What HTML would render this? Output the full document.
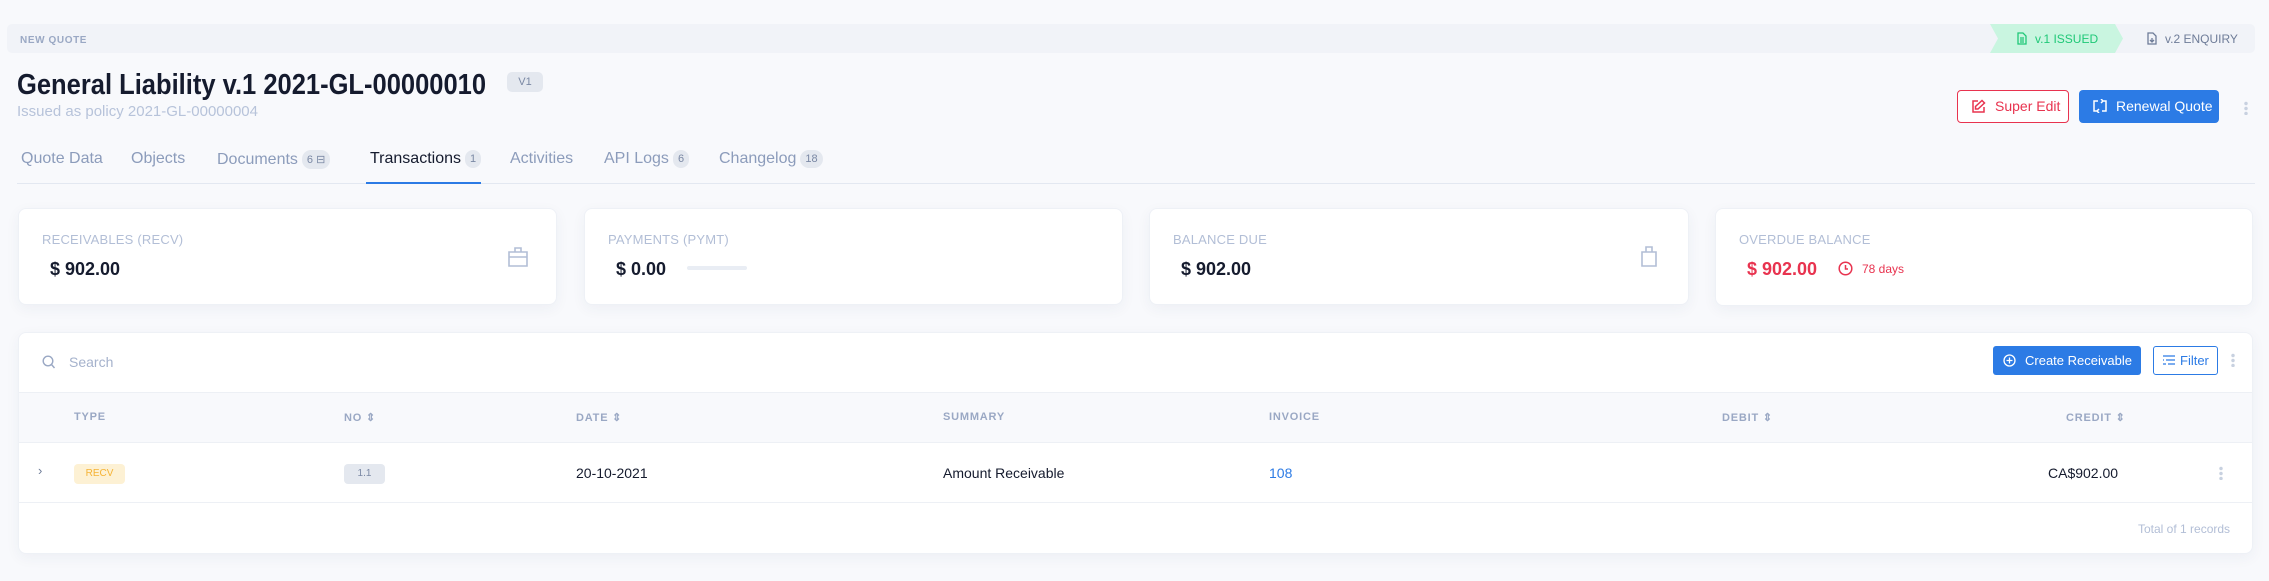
<!DOCTYPE html>
<html><head><meta charset="utf-8"><style>
*{box-sizing:border-box;margin:0;padding:0}
body{width:2269px;height:581px;background:#f8f9fc;font-family:"Liberation Sans",sans-serif;position:relative;overflow:hidden;color:#151b2e}
.a{position:absolute;white-space:nowrap}
.card{position:absolute;background:#fff;border-radius:8px;box-shadow:0 4px 14px rgba(40,60,100,.05);border:1px solid #eef1f6}
.lbl{font-size:13px;color:#b2bed6;letter-spacing:.2px}
.amt{font-size:18px;font-weight:bold;color:#151b2e}
.th{font-size:11px;font-weight:bold;color:#9aa8c4;letter-spacing:.8px}
.tab{font-size:16px;color:#8c9cbb;top:150px}
.cnt{display:inline-block;background:#e4e8ef;color:#7a88a4;border-radius:9px;font-size:11px;padding:3px 5px;margin-left:4px;vertical-align:1px}
</style></head><body>
<div class="a" style="left:7px;top:24px;width:2248px;height:29px;background:#f1f3f8;border-radius:5px"></div>
<div class="a" style="left:20px;top:35px;font-size:10px;font-weight:bold;color:#9aa8c4;letter-spacing:.6px">NEW QUOTE</div>
<svg class="a" style="left:1990px;top:24px" width="135" height="29"><polygon points="0,0 125,0 133,14.5 125,29 0,29 8,14.5" fill="#c9f5e0"/></svg>
<svg class="a" style="left:2017px;top:32px" width="10" height="13" viewBox="0 0 10 13"><path d="M1 1h5l3 3v8H1z M3 6h4M3 8h4M3 10h4" fill="none" stroke="#1fc877" stroke-width="1.3"/></svg>
<div class="a" style="left:2035px;top:32px;font-size:12px;color:#1fc877">v.1 ISSUED</div>
<svg class="a" style="left:2147px;top:32px" width="10" height="13" viewBox="0 0 10 13"><path d="M1 1h5l3 3v8H1z M5 6v4M3 8l2 2 2-2" fill="none" stroke="#6e7c98" stroke-width="1.3"/></svg>
<div class="a" style="left:2165px;top:32px;font-size:12px;color:#6e7c98">v.2 ENQUIRY</div>

<div class="a" style="left:17px;top:69px;font-size:29px;font-weight:bold;color:#151b2e;transform:scaleX(0.88);transform-origin:0 0">General Liability v.1 2021-GL-00000010</div>
<div class="a" style="left:507px;top:72px;width:36px;height:20px;background:#e4e8ef;border-radius:5px;font-size:11px;color:#7a88a4;text-align:center;line-height:20px">V1</div>
<div class="a" style="left:17px;top:103px;font-size:15px;color:#b7c3da">Issued as policy 2021-GL-00000004</div>

<div class="a" style="left:1957px;top:90px;width:112px;height:33px;border:1px solid #e8334f;border-radius:4px;background:#fff"></div>
<svg class="a" style="left:1971px;top:99px" width="15" height="15" viewBox="0 0 15 15"><path d="M7 2H2v11h11V8M11 1.5l2.5 2.5L7 10H4.5V7.5z" fill="none" stroke="#e8334f" stroke-width="1.5"/></svg>
<div class="a" style="left:1995px;top:98px;font-size:14px;color:#e8334f">Super Edit</div>
<div class="a" style="left:2079px;top:90px;width:140px;height:33px;background:#2c7be5;border-radius:4px"></div>
<svg class="a" style="left:2093px;top:99px" width="14" height="14" viewBox="0 0 14 14"><path d="M5 2H1v10h3M9 2h4v10H9M6 10l-2 2 2 2M8 0l2 2-2 2" fill="none" stroke="#fff" stroke-width="1.5"/></svg>
<div class="a" style="left:2116px;top:98px;font-size:14px;color:#fff">Renewal Quote</div>
<div class="a" style="left:2244px;top:101px;width:4px;height:14px;background:radial-gradient(circle,#c8d1e0 1.5px,transparent 2px) 0 0/4px 5px"></div>

<div class="a tab" style="left:21px">Quote Data</div>
<div class="a tab" style="left:131px">Objects</div>
<div class="a tab" style="left:217px">Documents<span class="cnt">6 ⊟</span></div>
<div class="a tab" style="left:370px;color:#151b2e">Transactions<span class="cnt">1</span></div>
<div class="a tab" style="left:510px">Activities</div>
<div class="a tab" style="left:604px">API Logs<span class="cnt">6</span></div>
<div class="a tab" style="left:719px">Changelog<span class="cnt">18</span></div>
<div class="a" style="left:17px;top:183px;width:2238px;height:1px;background:#e3e8f1"></div>
<div class="a" style="left:366px;top:182px;width:115px;height:2px;background:#2c7be5"></div>

<div class="card" style="left:18px;top:208px;width:539px;height:97px"></div>
<div class="card" style="left:584px;top:208px;width:539px;height:97px"></div>
<div class="card" style="left:1149px;top:208px;width:540px;height:97px"></div>
<div class="card" style="left:1715px;top:208px;width:538px;height:98px"></div>
<div class="a lbl" style="left:42px;top:232px">RECEIVABLES (RECV)</div>
<div class="a amt" style="left:50px;top:259px">$ 902.00</div>
<svg class="a" style="left:507px;top:246px" width="22" height="22" viewBox="0 0 22 22"><path d="M2 6h18v14H2zM8 6V2h6v4M2 11h18" fill="none" stroke="#b2bed6" stroke-width="1.6"/></svg>
<div class="a lbl" style="left:608px;top:232px">PAYMENTS (PYMT)</div>
<div class="a amt" style="left:616px;top:259px">$ 0.00</div>
<div class="a" style="left:687px;top:266px;width:60px;height:4px;background:#e9edf4;border-radius:2px"></div>
<div class="a lbl" style="left:1173px;top:232px">BALANCE DUE</div>
<div class="a amt" style="left:1181px;top:259px">$ 902.00</div>
<svg class="a" style="left:1640px;top:244px" width="18" height="24" viewBox="0 0 18 24"><path d="M2 8h14v14H2zM6 8V3h6v5" fill="none" stroke="#b2bed6" stroke-width="1.6"/></svg>
<div class="a lbl" style="left:1739px;top:232px">OVERDUE BALANCE</div>
<div class="a amt" style="left:1747px;top:259px;color:#e8334f">$ 902.00</div>
<svg class="a" style="left:1838px;top:261px" width="15" height="15" viewBox="0 0 15 15"><circle cx="7.5" cy="7.5" r="6.3" fill="none" stroke="#e8334f" stroke-width="1.5"/><path d="M7.5 4v4h2.5" fill="none" stroke="#e8334f" stroke-width="1.5"/></svg>
<div class="a" style="left:1862px;top:262px;font-size:12px;color:#e8334f">78 days</div>

<div class="card" style="left:18px;top:332px;width:2235px;height:222px;overflow:hidden">
 <div class="a" style="left:0;top:59px;width:100%;height:51px;background:#f8f9fc;border-top:1px solid #edf0f5;border-bottom:1px solid #edf0f5"></div>
 <div class="a" style="left:0;top:169px;width:100%;height:1px;background:#edf0f5"></div>
</div>
<svg class="a" style="left:42px;top:355px" width="14" height="15" viewBox="0 0 14 15"><circle cx="6" cy="6" r="4.8" fill="none" stroke="#9aa8c4" stroke-width="1.4"/><path d="M9.5 9.5l3 3.5" stroke="#9aa8c4" stroke-width="1.4"/></svg>
<div class="a" style="left:69px;top:354px;font-size:14px;color:#a5b2cc">Search</div>
<div class="a" style="left:1993px;top:346px;width:148px;height:29px;background:#2c7be5;border-radius:3px"></div>
<svg class="a" style="left:2003px;top:354px" width="13" height="13" viewBox="0 0 13 13"><circle cx="6.5" cy="6.5" r="5.5" fill="none" stroke="#fff" stroke-width="1.3"/><path d="M6.5 3.5v6M3.5 6.5h6" stroke="#fff" stroke-width="1.3"/></svg>
<div class="a" style="left:2025px;top:353px;font-size:13px;color:#fff">Create Receivable</div>
<div class="a" style="left:2153px;top:346px;width:65px;height:29px;border:1px solid #2c7be5;border-radius:3px;background:#fff"></div>
<svg class="a" style="left:2163px;top:355px" width="12" height="10" viewBox="0 0 12 10"><path d="M0 1h12M3 5h9M5 9h7" stroke="#2c7be5" stroke-width="1.2"/><path d="M0 5h1M0 9h3" stroke="#2c7be5" stroke-width="1.2"/></svg>
<div class="a" style="left:2180px;top:353px;font-size:13px;color:#2c7be5">Filter</div>
<div class="a" style="left:2231px;top:353px;width:4px;height:14px;background:radial-gradient(circle,#c8d1e0 1.5px,transparent 2px) 0 0/4px 5px"></div>

<div class="a th" style="left:74px;top:411px">TYPE</div>
<div class="a th" style="left:344px;top:411px">NO ⇕</div>
<div class="a th" style="left:576px;top:411px">DATE ⇕</div>
<div class="a th" style="left:943px;top:411px">SUMMARY</div>
<div class="a th" style="left:1269px;top:411px">INVOICE</div>
<div class="a th" style="left:1722px;top:411px">DEBIT ⇕</div>
<div class="a th" style="left:2066px;top:411px">CREDIT ⇕</div>

<div class="a" style="left:38px;top:463px;font-size:13px;color:#6e7c98">›</div>
<div class="a" style="left:74px;top:464px;width:51px;height:20px;background:#fdf1d4;border-radius:4px;font-size:10px;color:#f5b335;text-align:center;line-height:20px">RECV</div>
<div class="a" style="left:344px;top:464px;width:41px;height:20px;background:#e4e8ef;border-radius:4px;font-size:10px;color:#7a88a4;text-align:center;line-height:20px">1.1</div>
<div class="a" style="left:576px;top:465px;font-size:14px">20-10-2021</div>
<div class="a" style="left:943px;top:465px;font-size:14px">Amount Receivable</div>
<div class="a" style="left:1269px;top:465px;font-size:14px;color:#2c7be5">108</div>
<div class="a" style="left:2048px;top:465px;font-size:14px">CA$902.00</div>
<div class="a" style="left:2219px;top:466px;width:4px;height:14px;background:radial-gradient(circle,#c8d1e0 1.5px,transparent 2px) 0 0/4px 5px"></div>
<div class="a" style="left:2138px;top:522px;font-size:12px;color:#b2bed6">Total of 1 records</div>
</body></html>
